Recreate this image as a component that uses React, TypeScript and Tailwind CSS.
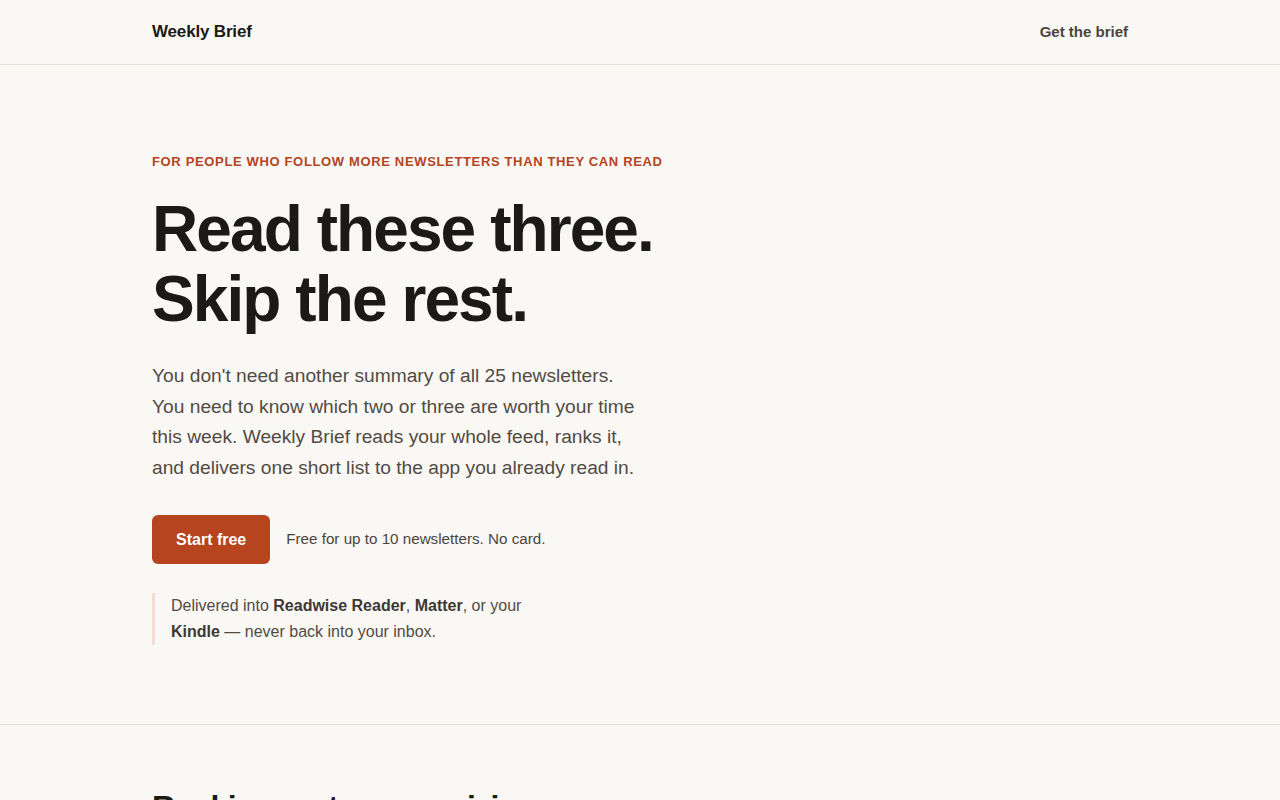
export default function App() {
  return (
    <div
      className="min-h-screen bg-[#faf8f4] text-[#1c1a17]"
      style={{ fontFamily: '"Liberation Sans", Arial, sans-serif' }}
    >
      {/* header */}
      <header className="border-b border-[#e6e2db]">
        <div className="mx-auto flex h-16 max-w-5xl items-center justify-between px-6">
          <a href="#" className="text-[17px] font-bold tracking-[-0.01em] text-[#1c1a17]">
            Weekly Brief
          </a>
          <a href="#" className="text-[15px] font-bold text-[#4a4540]">
            Get the brief
          </a>
        </div>
      </header>

      {/* hero */}
      <section className="border-b border-[#e6e2db]">
        <div className="mx-auto max-w-5xl px-6 pt-[89px] pb-[79px]">
          <p className="mb-6 text-[13px] leading-4 font-bold tracking-[0.05em] text-[#b5441f] uppercase">
            For people who follow more newsletters than they can read
          </p>
          <h1 className="mb-[26px] text-[64px] leading-[1.1] font-bold tracking-[-0.03em] text-[#1c1a17]">
            Read these three.
            <br />
            Skip the rest.
          </h1>
          <p className="max-w-[496px] text-[19.2px] leading-[1.6] text-[#524b44]">
            You don't need another summary of all 25 newsletters. You need to know which two or
            three are worth your time this week. Weekly Brief reads your whole feed, ranks it, and
            delivers one short list to the app you already read in.
          </p>

          <div className="mt-[31px] flex items-center gap-4">
            <a
              href="#"
              className="rounded-md bg-[#b5441f] px-6 py-3 text-base leading-[25px] font-bold text-white"
            >
              Start free
            </a>
            <span className="pt-px text-[15.2px] text-[#4a4540]">Free for up to 10 newsletters. No card.</span>
          </div>

          <p className="mt-[29px] max-w-sm border-l-[3px] border-[#f2dcd4] pl-4 text-base leading-[1.625] text-[#524b44]">
            Delivered into <strong className="font-bold text-[#3d3833]">Readwise Reader</strong>,{" "}
            <strong className="font-bold text-[#3d3833]">Matter</strong>, or your{" "}
            <strong className="font-bold text-[#3d3833]">Kindle</strong> — never back into your inbox.
          </p>
        </div>
      </section>

      {/* next section */}
      <section>
        <div className="mx-auto max-w-5xl px-6 pt-16 pb-20">
          <h2 className="text-[32px] leading-[1.15] font-bold tracking-[-0.02em] text-[#1c1a17]">
            Ranking, not summarizing.
          </h2>
        </div>
      </section>
    </div>
  );
}
